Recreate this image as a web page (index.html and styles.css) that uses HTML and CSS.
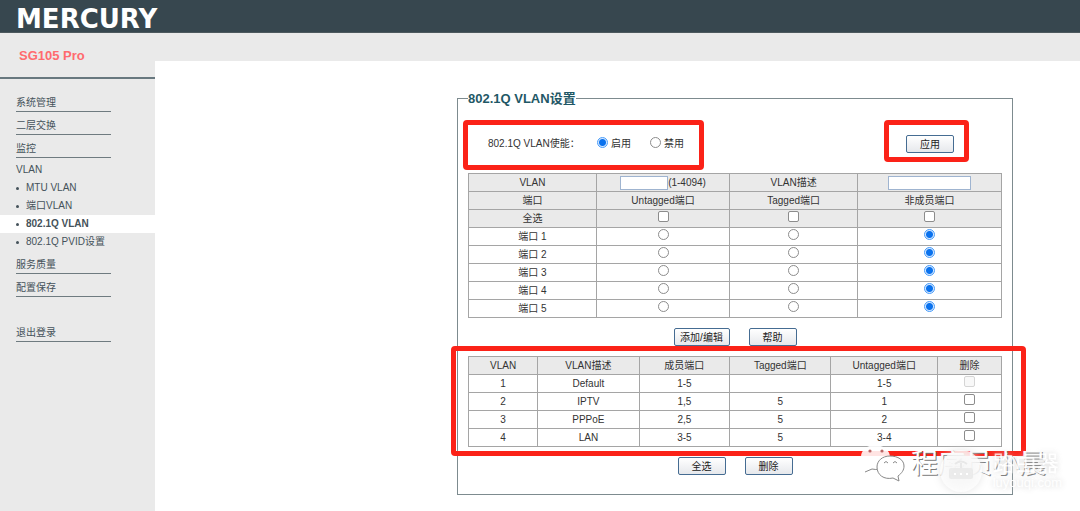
FILE: index.html
```html
<!DOCTYPE html>
<html lang="zh-CN">
<head>
<meta charset="utf-8">
<title>SG105 Pro</title>
<link rel="stylesheet" href="styles.css">
</head>
<body>
<header class="topbar"><span class="logo">MERCURY</span></header>
<div class="layout">
  <aside class="sidebar">
    <div class="model">SG105 Pro</div>
    <nav class="menu">
      <a class="item" href="#">系统管理</a>
      <a class="item" href="#">二层交换</a>
      <a class="item" href="#">监控</a>
      <a class="group" href="#">VLAN</a>
      <ul class="sub">
        <li><a href="#">MTU VLAN</a></li>
        <li><a href="#">端口VLAN</a></li>
        <li class="active"><a href="#">802.1Q VLAN</a></li>
        <li><a href="#">802.1Q PVID设置</a></li>
      </ul>
      <a class="item" href="#">服务质量</a>
      <a class="item" href="#">配置保存</a>
      <a class="item logout" href="#">退出登录</a>
    </nav>
  </aside>
  <main class="main">
    <div class="panel">
      <fieldset class="settings">
        <legend>802.1Q VLAN设置</legend>
        <div class="enable">
          <span class="enable-label">802.1Q VLAN使能：</span>
          <label class="choice"><input type="radio" name="enable" checked>启用</label>
          <label class="choice"><input type="radio" name="enable">禁用</label>
          <button class="btn apply" type="button">应用</button>
        </div>
        <table class="grid ports">
          <colgroup><col class="p1"><col class="p2"><col class="p3"><col class="p4"></colgroup>
          <tbody>
          <tr class="head"><td><label for="vid">VLAN</label></td><td><span class="field"><input class="text vid" id="vid" type="text">(1-4094)</span></td><td><label for="desc">VLAN描述</label></td><td><input class="text desc" id="desc" type="text"></td></tr>
          <tr class="head"><td>端口</td><td>Untagged端口</td><td>Tagged端口</td><td>非成员端口</td></tr>
          <tr class="head"><td>全选</td><td><input type="checkbox" aria-label="Untagged 全选"></td><td><input type="checkbox" aria-label="Tagged 全选"></td><td><input type="checkbox" aria-label="非成员 全选"></td></tr>
          <tr><td>端口 1</td><td><input type="radio" name="port1" aria-label="Untagged"></td><td><input type="radio" name="port1" aria-label="Tagged"></td><td><input type="radio" name="port1" aria-label="非成员" checked></td></tr>
          <tr><td>端口 2</td><td><input type="radio" name="port2" aria-label="Untagged"></td><td><input type="radio" name="port2" aria-label="Tagged"></td><td><input type="radio" name="port2" aria-label="非成员" checked></td></tr>
          <tr><td>端口 3</td><td><input type="radio" name="port3" aria-label="Untagged"></td><td><input type="radio" name="port3" aria-label="Tagged"></td><td><input type="radio" name="port3" aria-label="非成员" checked></td></tr>
          <tr><td>端口 4</td><td><input type="radio" name="port4" aria-label="Untagged"></td><td><input type="radio" name="port4" aria-label="Tagged"></td><td><input type="radio" name="port4" aria-label="非成员" checked></td></tr>
          <tr><td>端口 5</td><td><input type="radio" name="port5" aria-label="Untagged"></td><td><input type="radio" name="port5" aria-label="Tagged"></td><td><input type="radio" name="port5" aria-label="非成员" checked></td></tr>
          </tbody>
        </table>
        <div class="actions"><button class="btn wide" type="button">添加/编辑</button><button class="btn" type="button">帮助</button></div>
        <table class="grid vlans">
          <colgroup><col class="v1"><col class="v2"><col class="v3"><col class="v4"><col class="v5"><col class="v6"></colgroup>
          <thead>
          <tr class="head"><th>VLAN</th><th>VLAN描述</th><th>成员端口</th><th>Tagged端口</th><th>Untagged端口</th><th>删除</th></tr>
          </thead>
          <tbody>
          <tr><td>1</td><td>Default</td><td>1-5</td><td></td><td>1-5</td><td><input type="checkbox" aria-label="删除 VLAN 1" disabled></td></tr>
          <tr><td>2</td><td>IPTV</td><td>1,5</td><td>5</td><td>1</td><td><input type="checkbox" aria-label="删除 VLAN 2"></td></tr>
          <tr><td>3</td><td>PPPoE</td><td>2,5</td><td>5</td><td>2</td><td><input type="checkbox" aria-label="删除 VLAN 3"></td></tr>
          <tr><td>4</td><td>LAN</td><td>3-5</td><td>5</td><td>3-4</td><td><input type="checkbox" aria-label="删除 VLAN 4"></td></tr>
          </tbody>
        </table>
        <div class="actions"><button class="btn" type="button">全选</button><button class="btn" type="button">删除</button></div>
      </fieldset>
      <div class="mark mark-enable"></div>
      <div class="mark mark-apply"></div>
      <div class="mark mark-list"></div>
      <div class="wm-chat">
        <svg width="46" height="40" viewBox="0 0 46 40" aria-hidden="true">
          <path d="M15 1C7 1 1 6 1 13c0 5 2 8 6 10l-2 5 7-3c10 2 18-3 18-12C30 6 23 1 15 1Z" fill="#fff" fill-opacity=".88"/>
          <path d="M5 28l7-3q4 1 7 0" fill="none" stroke="#888"/>
          <path d="M30 12c-8 0-13 5-13 11 0 8 7 13 16 11l6 3-1-5c4-3 6-6 6-10 0-6-6-10-14-10Z" fill="#fff" stroke="#888"/>
          <circle cx="10" cy="7" r="1.6" fill="#b66"/><circle cx="22" cy="7" r="1.6" fill="#b66"/>
          <path d="M24 19q2-3 4 0M33 19q2-3 4 0" fill="none" stroke="#888"/>
        </svg>
        <span>程序员小晨</span>
      </div>
      <div class="wm-site">
        <svg width="44" height="44" viewBox="0 0 44 44" aria-hidden="true">
          <circle cx="22" cy="22" r="21" fill="#fff" fill-opacity=".75"/>
          <rect x="10" y="19" width="24" height="11" rx="2" fill="#e8e8e8" fill-opacity=".8"/>
          <path d="M16 15q6-5 12 0M22 14v5" fill="none" stroke="#e8e8e8" stroke-width="2"/>
          <path d="M15 25h2m4 0h2m4 0h2" stroke="#fff" stroke-width="2"/>
        </svg>
        <div class="wm-words"><span class="wm-name">路由器</span><span class="wm-url">luyouqi.com</span></div>
      </div>
    </div>
  </main>
</div>
</body>
</html>
```

FILE: styles.css
```css
* { box-sizing: border-box; }

body {
  margin: 0;
  min-height: 100vh;
  display: flex;
  flex-direction: column;
  background: #fff;
  color: #333;
  font: 10px/14px "Liberation Sans", Arial, "Noto Sans CJK SC", sans-serif;
}

a { color: inherit; text-decoration: none; }

.topbar {
  height: 33px;
  padding-left: 16px;
  display: flex;
  align-items: center;
  background: #37474f;
  border-bottom: 1px solid #4d595e;
}
.logo {
  color: #fff;
  font: bold 26px/30px "DejaVu Sans", sans-serif;
  padding-top: 5px;
}

.layout { flex: 1; display: flex; }

.sidebar {
  flex: none;
  width: 155px;
  background: #eaeaea;
  color: #45525a;
}
.model {
  height: 46px;
  padding-left: 19px;
  border-bottom: 2px solid #68787f;
  color: #ff6b6e;
  font-size: 13px;
  font-weight: bold;
  line-height: 46px;
}
.menu { padding-top: 10px; }
.item {
  display: block;
  margin: 0 44px 0 16px;
  padding-top: 5px;
  border-bottom: 1px solid #6f7b80;
  line-height: 17px;
}
.group {
  display: block;
  padding: 2px 0 0 16px;
  line-height: 19px;
}
.logout { margin-top: 22px; }
.sub { list-style: none; margin: 0; padding: 0; line-height: 18px; }
.sub li { display: flex; align-items: center; padding-left: 16px; }
.sub li::before {
  content: "";
  width: 3px;
  height: 3px;
  margin-right: 7px;
  border-radius: 50%;
  background: #45525a;
}
.sub .active { background: #fff; font-weight: bold; }

.main {
  flex: 1;
  min-width: 0;
  padding: 30px 67px 16px 302px;
  border-top: 28px solid #eaeaea;
}
.panel { position: relative; }

.settings {
  min-width: 0;
  margin: 0;
  padding: 0 10px 9px;
  border: 1px solid #7d8b8f;
}
.settings legend {
  padding: 0;
  color: #1f5866;
  font-size: 13px;
  font-weight: bold;
  line-height: 15px;
}

.enable {
  display: flex;
  align-items: center;
  padding: 29px 48px 20px 20px;
}
.enable-label { width: 109px; white-space: nowrap; }
.choice { display: flex; align-items: center; gap: 3px; margin-right: 19px; }
.apply { margin-left: auto; }

.btn {
  width: 48px;
  height: 18px;
  padding: 2px 0 0;
  border: 1px solid #456c92;
  border-radius: 2px;
  background: linear-gradient(#fff, #e6e8ec);
  color: #222;
  font: inherit;
}
.btn.wide { width: 56px; }
.actions {
  display: flex;
  justify-content: center;
  gap: 19px;
  padding: 10px 0;
}

.grid {
  width: 100%;
  table-layout: fixed;
  border-collapse: collapse;
}
.grid td, .grid th {
  height: 18px;
  padding: 0;
  border: 1px solid #a5a5a5;
  font-weight: normal;
  line-height: 15px;
  text-align: center;
}
.head { background: #eaeaea; }
.p1 { width: 24%; }
.p2 { width: 25%; }
.p3 { width: 24%; }
.p4 { width: 27%; }
.v1 { width: 13%; }
.v2 { width: 19%; }
.v3 { width: 17%; }
.v4 { width: 19%; }
.v5 { width: 20%; }
.v6 { width: 12%; }

.field { display: flex; justify-content: center; align-items: center; }
.text {
  display: block;
  height: 14px;
  padding: 0 2px;
  border: 1px solid #9fb4d0;
  background: #fff;
  font: inherit;
}
.vid { width: 48px; }
.desc { width: 83px; margin: 0 auto; }

input[type="radio"], input[type="checkbox"] {
  appearance: none;
  display: block;
  width: 11px;
  height: 11px;
  margin: 0;
  border: 1px solid #8c8c8c;
  background: #fff;
}
input[type="radio"] { border-radius: 50%; }
input[type="checkbox"] { border-radius: 2px; }
input[type="checkbox"]:disabled { border-color: #d5d5d5; background: #f8f8f8; }
input[type="radio"]:checked {
  border-color: #4a9dfa;
  background: radial-gradient(circle, #0a72ee 3px, #d5e8ff 4px);
}
.choice input[type="radio"] { margin-bottom: 3px; }
.grid input[type="radio"], .grid input[type="checkbox"] { margin: 0 auto 4px; }

/* Red highlight frames drawn over the form */
.mark {
  position: absolute;
  border: 5px solid #fb2218;
  border-radius: 4px;
  pointer-events: none;
}
.mark-enable { left: 6px; top: 29px; width: 241px; height: 50px; }
.mark-apply { right: 44px; top: 29px; width: 85px; height: 42px; }
.mark-list { left: -6px; right: -13px; top: 255px; height: 110px; }

/* Watermarks over the lower right corner */
.wm-chat, .wm-site {
  position: absolute;
  display: flex;
  align-items: center;
  color: #fff;
  white-space: nowrap;
  pointer-events: none;
}
.wm-chat {
  right: -33px;
  top: 353px;
  gap: 5px;
  font-size: 27px;
  line-height: 40px;
  text-shadow: 1px 1px 0 #777;
}
.wm-site { right: -49px; top: 358px; gap: 10px; }
.wm-site svg { filter: drop-shadow(0 0 4px #ddd); }
.wm-words { display: flex; flex-direction: column; text-shadow: 0 0 6px #ccc; }
.wm-name { font-size: 22px; line-height: 24px; opacity: .8; }
.wm-url { font-size: 13px; line-height: 14px; }
```
